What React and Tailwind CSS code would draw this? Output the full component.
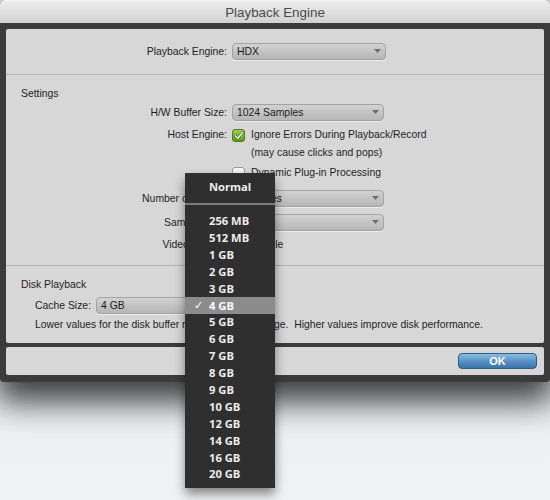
import React from 'react';

const labelW = 'w-[226px] shrink-0 text-right pr-[5px]';

const Dropdown = ({ value, className = 'w-[152px]' }) => (
    <div className={`relative h-[17px] ${className} rounded-[4px] border border-[#a3a3a3] bg-gradient-to-b from-[#d2d2d2] to-[#b6b6b6] shadow-[0_1px_0_rgba(255,255,255,0.5)] flex items-center pl-[4px] text-[#1c1c1c]`}>
        <span>{value}</span>
        <svg className="absolute right-[4px] top-[5px]" width="7" height="4" viewBox="0 0 7 4">
            <path d="M0 0 L7 0 L3.5 4 Z" fill="#6e6e6e" />
        </svg>
    </div>
);

const Checkbox = ({ checked }) =>
    checked ? (
        <div className="w-[13px] h-[13px] rounded-[3px] border border-[#4d7a1c] bg-gradient-to-b from-[#9ad14a] to-[#5e9d22] flex items-center justify-center">
            <svg width="10" height="9" viewBox="0 0 10 9">
                <path d="M1.3 4.8 L3.9 7.3 L8.7 1.2" fill="none" stroke="#3a5f12" strokeWidth="2.6" strokeLinecap="round" strokeLinejoin="round" />
                <path d="M1.3 4.8 L3.9 7.3 L8.7 1.2" fill="none" stroke="#f4f9e8" strokeWidth="1.5" strokeLinecap="round" strokeLinejoin="round" />
            </svg>
        </div>
    ) : (
        <div className="w-[13px] h-[13px] rounded-[3px] border border-[#9c9c9c] bg-gradient-to-b from-[#fafafa] to-[#e4e4e4]" />
    );

// Cache size pop-up menu items
const cacheSizes = [
    '256 MB', '512 MB', '1 GB', '2 GB', '3 GB', '4 GB', '5 GB', '6 GB',
    '7 GB', '8 GB', '9 GB', '10 GB', '12 GB', '14 GB', '16 GB', '20 GB'
];

const App = () => {
    return (
        <div className="relative w-[550px] h-[500px] overflow-hidden bg-gradient-to-b from-[#e6e7e9] to-[#eff1f3] font-['Liberation_Sans',Arial,sans-serif] text-[10.4px] text-[#1e1e1e]">
            {/* Window */}
            <div className="w-[550px] rounded-t-[5px] rounded-b-[4px] bg-[#3b3b3b] shadow-[0_16px_32px_4px_rgba(0,0,0,0.75)]">
                {/* Title bar */}
                <div className="h-[23px] rounded-t-[5px] border-t border-[#f6f6f6] bg-gradient-to-b from-[#ececec] to-[#d2d2d2] flex items-center justify-center">
                    <span className="text-[13.4px] text-[#4a4a4a] pt-[2px]">Playback Engine</span>
                </div>

                <div className="px-[6px] pt-[6px] pb-[7px]">
                    {/* Main panel */}
                    <div className="h-[314px] rounded-[2px] bg-[#d7d7d7] flex flex-col">
                        <div className="h-[45px] flex items-center">
                            <div className={labelW}>Playback Engine:</div>
                            <Dropdown value="HDX" className="w-[154px]" />
                        </div>
                        <div className="h-[1px] bg-[#b3b3b3]" />

                        {/* Settings */}
                        <div className="h-[190px] flex flex-col pt-[12px]">
                            <div className="h-[14px] flex items-center pl-[15px]">Settings</div>
                            <div className="h-[17px] mt-[3px] flex items-center">
                                <div className={labelW}>H/W Buffer Size:</div>
                                <Dropdown value="1024 Samples" />
                            </div>
                            <div className="h-[16px] mt-[6px] flex items-center">
                                <div className={labelW}>Host Engine:</div>
                                <Checkbox checked />
                                <span className="ml-[6px]">Ignore Errors During Playback/Record</span>
                            </div>
                            <div className="h-[16px] mt-[2px] flex items-center pl-[245px]">
                                (may cause clicks and pops)
                            </div>
                            <div className="h-[16px] mt-[4px] flex items-center">
                                <div className={labelW}></div>
                                <Checkbox />
                                <span className="ml-[6px]">Dynamic Plug-in Processing</span>
                            </div>
                            <div className="h-[17px] mt-[9px] flex items-center">
                                <div className={labelW}>Number of Voices:</div>
                                <Dropdown value="64 Voices" />
                            </div>
                            <div className="h-[17px] mt-[7px] flex items-center">
                                <div className={labelW}>Sample Rate:</div>
                                <Dropdown value="48 kHz" />
                            </div>
                            <div className="h-[16px] mt-[6px] flex items-center">
                                <div className={labelW}>Video Engine:</div>
                                <Checkbox />
                                <span className="ml-[6px]">Enable</span>
                            </div>
                        </div>
                        <div className="h-[1px] bg-[#b3b3b3]" />

                        {/* Disk Playback */}
                        <div className="flex flex-col pt-[12px]">
                            <div className="h-[14px] flex items-center pl-[15px]">Disk Playback</div>
                            <div className="h-[17px] mt-[5px] flex items-center pl-[29px]">
                                <span className="w-[61px]">Cache Size:</span>
                                <Dropdown value="4 GB" className="w-[150px]" />
                            </div>
                            <div className="h-[14px] mt-[4px] flex items-center pl-[29px]">
                                Lower values for the disk buffer reduce memory usage.&nbsp; Higher values improve disk performance.
                            </div>
                        </div>
                    </div>

                    {/* Button bar */}
                    <div className="h-[28px] mt-[4px] rounded-[2px] bg-[#d7d7d7] flex items-center justify-end pr-[7px]">
                        <button className="w-[79px] h-[16px] rounded-[4px] border border-[#2e5d87] bg-gradient-to-b from-[#8cbde3] via-[#5a93c4] to-[#3a74a8] text-white font-bold text-[11px] leading-none">
                            OK
                        </button>
                    </div>
                </div>
            </div>

            {/* Cache size pop-up menu */}
            <div className="absolute left-[185px] top-[173px] w-[90px] h-[315px] bg-[#2f2f2f] shadow-[0_6px_10px_rgba(0,0,0,0.45)] font-['Open_Sans',sans-serif] font-bold text-[11.2px] text-[#ededed] pt-[6px]">
                <div className="h-[17px] flex items-center pl-[24px]">Normal</div>
                <div className="h-[2px] mt-[7px] bg-[#7a7a7a]" />
                <div className="mt-[8px] flex flex-col">
                    {cacheSizes.map((size) => (
                        <div
                            key={size}
                            className={`relative h-[16.9px] flex items-center pl-[24px] ${size === '4 GB' ? 'bg-[#8c8c8c] text-white' : ''}`}
                        >
                            {size === '4 GB' && (
                                <span className="absolute left-[9px] font-['DejaVu_Sans',sans-serif] text-[11px]">✓</span>
                            )}
                            {size}
                        </div>
                    ))}
                </div>
            </div>
        </div>
    );
};

export default App;
